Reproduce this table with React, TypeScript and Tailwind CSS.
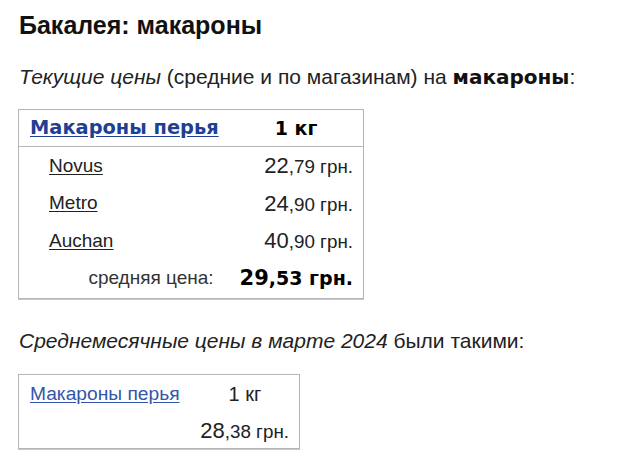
import React from "react";

const arial = { fontFamily: '"Liberation Sans", Arial, sans-serif' };

function Price({ big, small, bold = false }: { big: string; small: string; bold?: boolean }) {
  return (
    <span className={bold ? "font-bold font-['DejaVu_Sans',sans-serif] text-black" : "text-[#222]"}>
      <span className={bold ? "text-[21px]" : "text-[22px]"}>{big}</span>
      <span className={bold ? "text-[19px]" : "text-[18.8px]"}>{small}</span>
    </span>
  );
}

export default function App() {
  const stores = [
    { name: "Novus", big: "22", small: ",79 грн." },
    { name: "Metro", big: "24", small: ",90 грн." },
    { name: "Auchan", big: "40", small: ",90 грн." },
  ];
  return (
    <div className="bg-white w-[620px] h-[466px] pl-[19px] pt-[10px] text-[#222] font-['Liberation_Sans',Arial,sans-serif]" style={arial}>
      <h1 className="text-[25px] font-bold text-[#111] leading-[30px]">Бакалея: макароны</h1>
      <p className="mt-[24px] text-[21px] leading-[26px] text-[#222]">
        <i>Текущие цены</i> (средние и по магазинам) на{" "}
        <b className="font-['DejaVu_Sans',sans-serif] font-bold text-[#111] text-[20px]">макароны</b>:
      </p>
      <div className="mt-[19px] ml-[-1px] w-[346px] border border-[#b5b5b5] shadow-[0_1px_0_#c8c8c8]">
        <div className="flex items-center h-[37px] border-b border-[#b5b5b5]">
          <a className="ml-[11px] text-[19.4px] font-bold text-[#1f3f94] underline underline-offset-2 font-['DejaVu_Sans',sans-serif]">
            Макароны перья
          </a>
          <span className="ml-[56px] text-[19px] font-bold text-black font-['DejaVu_Sans',sans-serif]">1 кг</span>
        </div>
        <div className="pt-[0px]">
          {stores.map((s) => (
            <div key={s.name} className="flex items-center justify-between h-[37.5px] pl-[30px] pr-[10px]">
              <a className="text-[19px] text-[#222] underline underline-offset-2">{s.name}</a>
              <Price big={s.big} small={s.small} />
            </div>
          ))}
          <div className="flex items-center justify-end h-[37.5px] pr-[10px] mb-[1px]">
            <span className="text-[19px] text-[#333] mr-[26px]">средняя цена:</span>
            <Price big="29" small=",53 грн." bold />
          </div>
        </div>
      </div>
      <p className="mt-[29px] text-[21px] leading-[26px] text-[#222]">
        <i>Среднемесячные цены в марте 2024</i> были такими:
      </p>
      <div className="mt-[20px] ml-[-1px] w-[282px] h-[75px] border border-[#b5b5b5] shadow-[0_1px_0_#c8c8c8] pl-[11px] pr-[10px]">
        <div className="flex items-center h-[36px] mt-[1px]">
          <a className="text-[19.2px] text-[#3355aa] underline underline-offset-2">Макароны перья</a>
          <span className="ml-[49px] text-[20px] text-[#222]">1 кг</span>
        </div>
        <div className="flex justify-end h-[36px] items-center">
          <Price big="28" small=",38 грн." />
        </div>
      </div>
    </div>
  );
}
